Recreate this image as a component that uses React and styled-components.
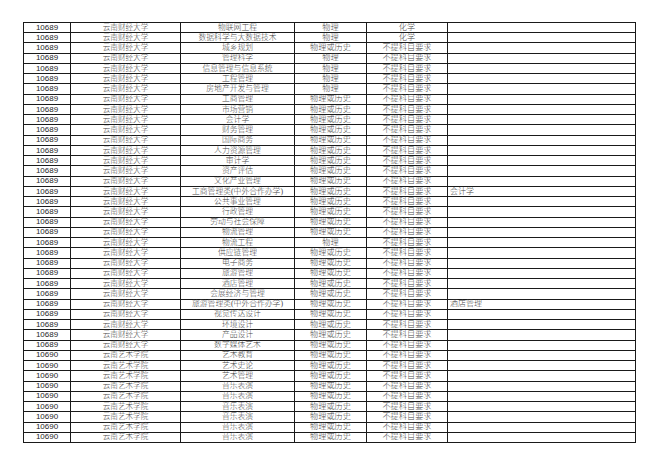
import React from "react";
import styled, { createGlobalStyle } from "styled-components";

const GlobalStyle = createGlobalStyle`
  html, body {
    margin: 0;
    padding: 0;
    background: #ffffff;
  }
`;

const U1 = ["10689", "云南财经大学"];
const U2 = ["10690", "云南艺术学院"];
const PH = "物理或历史";
const NO = "不提科目要求";

const rows = [
  [...U1, "物联网工程", "物理", "化学", ""],
  [...U1, "数据科学与大数据技术", "物理", "化学", ""],
  [...U1, "城乡规划", PH, NO, ""],
  [...U1, "管理科学", "物理", NO, ""],
  [...U1, "信息管理与信息系统", "物理", NO, ""],
  [...U1, "工程管理", "物理", NO, ""],
  [...U1, "房地产开发与管理", "物理", NO, ""],
  [...U1, "工商管理", PH, NO, ""],
  [...U1, "市场营销", PH, NO, ""],
  [...U1, "会计学", PH, NO, ""],
  [...U1, "财务管理", PH, NO, ""],
  [...U1, "国际商务", PH, NO, ""],
  [...U1, "人力资源管理", PH, NO, ""],
  [...U1, "审计学", PH, NO, ""],
  [...U1, "资产评估", PH, NO, ""],
  [...U1, "文化产业管理", PH, NO, ""],
  [...U1, "工商管理类(中外合作办学)", PH, NO, "会计学"],
  [...U1, "公共事业管理", PH, NO, ""],
  [...U1, "行政管理", PH, NO, ""],
  [...U1, "劳动与社会保障", PH, NO, ""],
  [...U1, "物流管理", PH, NO, ""],
  [...U1, "物流工程", "物理", NO, ""],
  [...U1, "供应链管理", PH, NO, ""],
  [...U1, "电子商务", PH, NO, ""],
  [...U1, "旅游管理", PH, NO, ""],
  [...U1, "酒店管理", PH, NO, ""],
  [...U1, "会展经济与管理", PH, NO, ""],
  [...U1, "旅游管理类(中外合作办学)", PH, NO, "酒店管理"],
  [...U1, "视觉传达设计", PH, NO, ""],
  [...U1, "环境设计", PH, NO, ""],
  [...U1, "产品设计", PH, NO, ""],
  [...U1, "数字媒体艺术", PH, NO, ""],
  [...U2, "艺术教育", PH, NO, ""],
  [...U2, "艺术史论", PH, NO, ""],
  [...U2, "艺术管理", PH, NO, ""],
  [...U2, "音乐表演", PH, NO, ""],
  [...U2, "音乐表演", PH, NO, ""],
  [...U2, "音乐表演", PH, NO, ""],
  [...U2, "音乐表演", PH, NO, ""],
  [...U2, "音乐表演", PH, NO, ""],
  [...U2, "音乐表演", PH, NO, ""],
];

const Page = styled.div`
  padding: 22px 0 0 23px;
  width: 660px;
  height: 466px;
  box-sizing: border-box;
`;

const Sheet = styled.div`
  display: grid;
  grid-template-columns: 47px 110px 114px 72px 81px 188px;
  grid-template-rows: repeat(${(p) => p.$rows}, 1fr);
  width: 613px;
  height: 421px;
  box-sizing: border-box;
  border-top: 1px solid #1a1a1a;
  border-left: 1px solid #1a1a1a;
`;

const Cell = styled.div`
  display: flex;
  align-items: center;
  justify-content: ${(p) => (p.$left ? "flex-start" : "center")};
  padding-left: ${(p) => (p.$left ? "2px" : "0")};
  box-sizing: border-box;
  min-height: 0;
  white-space: nowrap;
  border-right: 1px solid #1a1a1a;
  border-bottom: 1px solid #1a1a1a;
  font-family: ${(p) =>
    p.$code
      ? '"Liberation Sans", Arial, sans-serif'
      : '"Liberation Serif", "Noto Sans CJK SC", serif'};
  font-size: ${(p) => p.$size || 8}px;
  font-weight: ${(p) => (p.$code ? 400 : 300)};
  color: ${(p) => (p.$code ? "#1f1f1f" : "#4a4a4a")};
  line-height: 8px;
`;

export default function App() {
  return (
    <>
      <GlobalStyle />
      <Page>
        <Sheet $rows={rows.length}>
          {rows.map((r, i) => (
            <React.Fragment key={i}>
              <Cell $code $size={8}>{r[0]}</Cell>
              <Cell $size={7.6}>{r[1]}</Cell>
              <Cell $size={7.8}>{r[2]}</Cell>
              <Cell $size={8.2}>{r[3]}</Cell>
              <Cell $size={8.2}>{r[4]}</Cell>
              <Cell $left $size={8}>{r[5]}</Cell>
            </React.Fragment>
          ))}
        </Sheet>
      </Page>
    </>
  );
}
